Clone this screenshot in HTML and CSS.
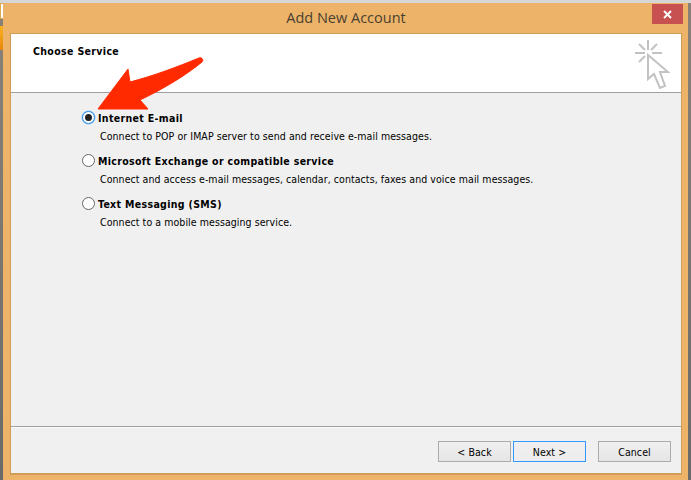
FILE: index.html
```html
<!DOCTYPE html>
<html lang="en">
<head>
<meta charset="utf-8">
<title>Add New Account</title>
<link rel="stylesheet" href="styles.css">
</head>
<body>
<div class="desk-edge"></div>
<div class="desk-tab"></div>
<div class="window">
  <div class="titlebar">
    <div class="title">Add New Account</div>
    <div class="close"><svg width="9" height="9" viewBox="0 0 9 9"><path d="M1 1L8 8M8 1L1 8" stroke="#fff" stroke-width="2"/></svg></div>
  </div>
  <div class="client">
    <div class="header">
      <div class="heading">Choose Service</div>
      <svg class="spark" width="36" height="52" viewBox="0 0 36 52" fill="none" stroke="#c2c2c2" stroke-width="2">
        <path d="M14 1V11M1 14H11M18 14H28M5 5L11 11M23 5L17 11M5 23L11 17"/>
        <path d="M14 16V40L20 35L26 49L31 47L26 33L34 33Z" fill="#fff"/>
      </svg>
    </div>
    <div class="body">
      <div class="options">
        <div class="option">
          <div class="choice"><span class="radio on"></span><span class="label">Internet E-mail</span></div>
          <div class="desc">Connect to POP or IMAP server to send and receive e-mail messages.</div>
        </div>
        <div class="option">
          <div class="choice"><span class="radio"></span><span class="label">Microsoft Exchange or compatible service</span></div>
          <div class="desc">Connect and access e-mail messages, calendar, contacts, faxes and voice mail messages.</div>
        </div>
        <div class="option">
          <div class="choice"><span class="radio"></span><span class="label">Text Messaging (SMS)</span></div>
          <div class="desc">Connect to a mobile messaging service.</div>
        </div>
      </div>
      <div class="footer">
        <button class="btn">&lt; Back</button>
        <button class="btn primary">Next &gt;</button>
        <button class="btn cancel">Cancel</button>
      </div>
    </div>
  </div>
</div>
<svg class="arrow" width="108" height="60" viewBox="0 0 108 60"><path d="M1 53L31 13L33 26C56 20 80 11 102 2C105 1 107 4 105 6C88 20 66 33 43 44L51 53Z" fill="#ff2a00" stroke="#ff2a00" stroke-width="1" stroke-linejoin="round"/></svg>
</body>
</html>
```
FILE: styles.css
```css
* { box-sizing: border-box; }
html, body { margin: 0; height: 100%; }
body {
  position: relative;
  width: 691px;
  height: 480px;
  overflow: hidden;
  background: linear-gradient(#d6d6d6 0, #d6d6d6 3px, #8a8278 3px, #6a6a6a 100%);
  padding: 3px 3px 0;
  font-family: "DejaVu Sans Condensed", "DejaVu Sans", sans-serif;
  font-stretch: condensed;
  color: #000;
}
.desk-edge {
  position: absolute;
  left: 0; top: 26px;
  width: 3px; height: 24px;
  background: linear-gradient(#f7b21c, #e8860c);
}
.desk-tab {
  position: absolute;
  left: 0; top: 3px;
  width: 3px; height: 16px;
  background: #fff;
  border: 1px solid #d9a94a;
  border-right: 0;
}
.window {
  height: 477px;
  background: #edb469;
  display: flex;
  flex-direction: column;
  padding: 0 6px 5px 7px;
}
.titlebar {
  height: 30px;
  flex: none;
  display: flex;
  position: relative;
  justify-content: center;
  align-items: center;
}
.title {
  font-family: "Open Sans", sans-serif;
  font-stretch: normal;
  font-size: 14.500px;
  color: #4a4030;
  padding-bottom: 2px;
}
.close {
  position: absolute;
  right: -1px; top: 1px;
  width: 31px; height: 20px;
  background: #c75050;
  display: flex;
  align-items: center;
  justify-content: center;
}
.client {
  flex: 1;
  display: flex;
  flex-direction: column;
  border: 1px solid #cf9d55;
  border-width: 1px 1px 2px 1px;
  background: #f0f0f0;
  min-height: 0;
}
.header {
  height: 59px;
  flex: none;
  background: #fff;
  border-bottom: 1px solid #a0a0a0;
  position: relative;
  padding: 11px 0 0 22px;
}
.heading {
  font-size: 10.500px;
  font-weight: 700;
  line-height: 13px;
  letter-spacing: 0.35px;
}
.spark { position: absolute; right: 11px; top: 5px; }
.body {
  flex: 1;
  display: flex;
  flex-direction: column;
  justify-content: space-between;
  min-height: 0;
}
.options {
  padding: 16px 0 0 71px;
  display: flex;
  flex-direction: column;
  gap: 9px;
}
.choice { display: flex; align-items: center; gap: 3px; height: 17px; }
.radio {
  width: 13px; height: 13px;
  border-radius: 50%;
  border: 1px solid #666;
  background: #fff;
  display: flex;
  align-items: center;
  justify-content: center;
}
.radio.on { border-color: #2a8ce8; box-shadow: 0 0 0 0.500px #8cc4f4; }
.radio.on::after {
  content: "";
  width: 7px; height: 7px;
  border-radius: 50%;
  background: #222;
}
.label { font-size: 10.500px; font-weight: 700; letter-spacing: 0.33px; }
.desc {
  font-size: 10.500px;
  line-height: 13px;
  margin: 4px 0 0 18px;
  letter-spacing: 0.07px;
}
.footer {
  height: 47px;
  flex: none;
  border-top: 1px solid #a0a0a0;
  box-shadow: inset 0 1px 0 #fbfbfb;
  display: flex;
  align-items: flex-start;
  padding: 14px 0 0 427px;
  gap: 2px;
}
.btn {
  appearance: none;
  width: 73px; height: 21px;
  border: 1px solid #acacac;
  background: linear-gradient(#f0f0f0, #e5e5e5);
  font-family: inherit;
  font-stretch: inherit;
  font-size: 10.500px;
  letter-spacing: 0.1px;
  color: #000;
  padding: 0;
}
.btn.primary { border: 1px solid #3399ff; background: linear-gradient(#f0f0f0, #ececec); }
.btn.cancel { margin-left: 10px; }
.arrow { position: absolute; left: 97px; top: 56px; }
```
